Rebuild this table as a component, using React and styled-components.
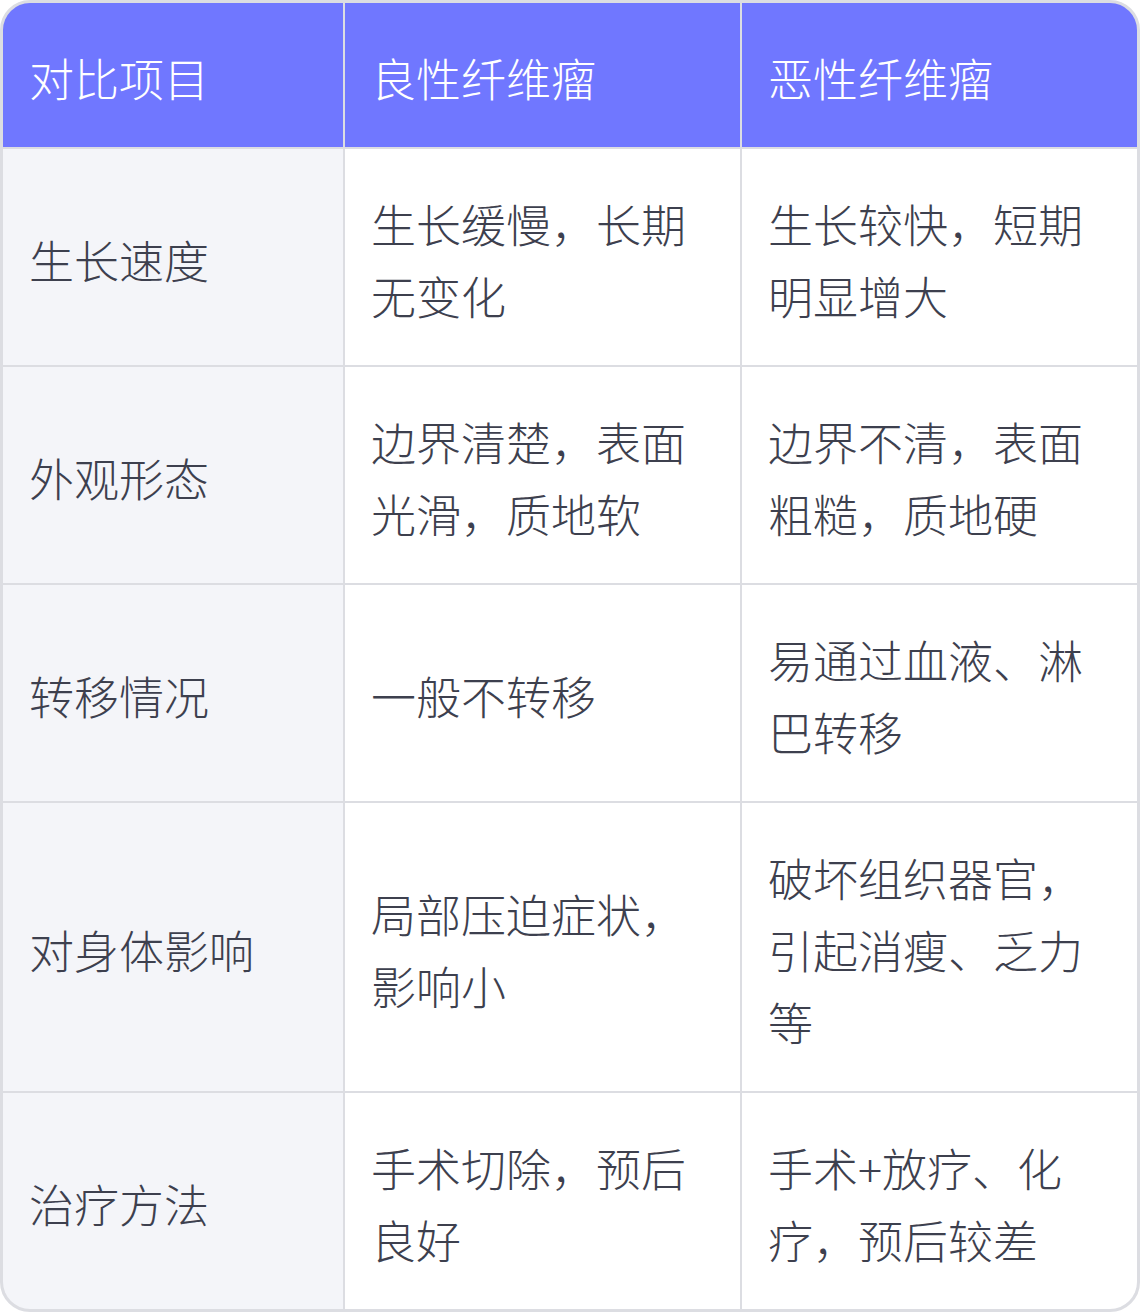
import styled, { createGlobalStyle } from "styled-components";

const GlobalStyle = createGlobalStyle`
  html, body {
    margin: 0;
    padding: 0;
    background: #ffffff;
  }
  body {
    font-family: "Noto Sans CJK SC", "Noto Sans", sans-serif;
  }
`;

const columns = ["对比项目", "良性纤维瘤", "恶性纤维瘤"];

const rows = [
  ["生长速度", "生长缓慢，长期无变化", "生长较快，短期明显增大"],
  ["外观形态", "边界清楚，表面光滑，质地软", "边界不清，表面粗糙，质地硬"],
  ["转移情况", "一般不转移", "易通过血液、淋巴转移"],
  ["对身体影响", "局部压迫症状，影响小", "破坏组织器官，引起消瘦、乏力等"],
  ["治疗方法", "手术切除，预后良好", "手术+放疗、化疗，预后较差"],
];

export default function App() {
  return (
    <>
      <GlobalStyle />
      <StyledFrame>
        <StyledGrid>
          {columns.map((label) => (
            <StyledHeadCell key={label}>{label}</StyledHeadCell>
          ))}
          {rows.map((row) =>
            row.map((text, i) => (
              <StyledCell key={row[0] + i} $label={i === 0}>
                {text}
              </StyledCell>
            ))
          )}
        </StyledGrid>
      </StyledFrame>
    </>
  );
}

const StyledFrame = styled.div`
  box-sizing: border-box;
  width: 1140px;
  border: 3px solid #dcdde2;
  border-radius: 30px;
  overflow: hidden;
  background: #dcdde2;
`;

const StyledGrid = styled.div`
  display: grid;
  grid-template-columns: 340px 395px 395px;
  gap: 2px;
`;

const StyledHeadCell = styled.div`
  box-sizing: border-box;
  padding: 39px 26px 33px;
  background: #7077ff;
  color: #ffffff;
  font-size: 45px;
  line-height: 72px;
  font-weight: 300;
`;

const StyledCell = styled.div`
  box-sizing: border-box;
  display: flex;
  align-items: center;
  padding: 39px 26px 33px;
  background: ${({ $label }) => ($label ? "#f4f5f9" : "#ffffff")};
  color: #3d404e;
  font-size: 45px;
  line-height: 72px;
  font-weight: 300;
`;
